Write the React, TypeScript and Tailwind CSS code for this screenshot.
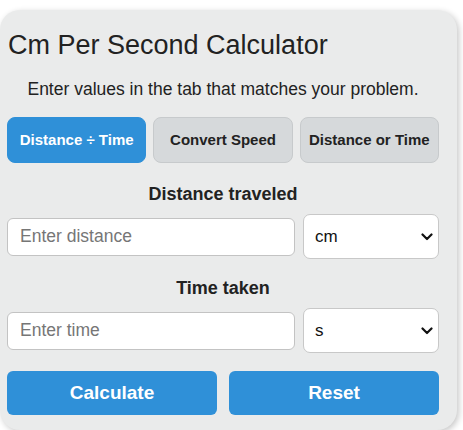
import { useState } from 'react';

const tabs = ['Distance ÷ Time', 'Convert Speed', 'Distance or Time'];

function Chevron() {
  return (
    <svg className="pointer-events-none absolute right-[6px] top-1/2 -translate-y-1/2" width="12" height="8" viewBox="0 0 12 8" fill="none">
      <path d="M1.5 1.5 L6 6 L10.5 1.5" stroke="#111" strokeWidth="2.2" strokeLinecap="round" strokeLinejoin="round" />
    </svg>
  );
}

function Field({ label, placeholder, unit }: { label: string; placeholder: string; unit: string }) {
  return (
    <div className="flex flex-col">
      <div className="pt-[2px] text-center text-[18px] font-bold leading-[21px] text-[#222]">{label}</div>
      <div className="mt-[9px] flex items-center gap-[8px]">
        <input
          type="text"
          placeholder={placeholder}
          className="h-[38px] min-w-0 flex-1 rounded-[6px] border border-[#c3c3c3] bg-white px-[12px] text-[17.5px] text-[#222] outline-none placeholder:text-[#767676]"
        />
        <div className="relative w-[136px]">
          <select
            defaultValue={unit}
            className="h-[45px] w-full appearance-none rounded-[7px] border border-[#c8c8c8] bg-white pl-[11px] pr-[24px] text-[17px] text-[#111] outline-none"
          >
            <option value={unit}>{unit}</option>
          </select>
          <Chevron />
        </div>
      </div>
    </div>
  );
}

export default function App() {
  const [active, setActive] = useState(0);

  return (
    <div className="h-[430px] w-[463px] overflow-hidden bg-white pt-[10px] font-['Liberation_Sans',Arial,sans-serif]">
      <div className="h-[420px] w-[457px] rounded-[20px] bg-[#eaebeb] pl-[7px] pr-[18px] pt-[20px] shadow-[2px_2px_6px_rgba(0,0,0,0.22)]">
        <h1 className="pl-[1px] text-[27px] leading-[31px] text-[#222]">Cm Per Second Calculator</h1>
        <p className="mt-[18px] text-center text-[17.5px] leading-[21px] text-[#222]">
          Enter values in the tab that matches your problem.
        </p>

        <div className="mt-[17px] grid grid-cols-3 gap-[7px]">
          {tabs.map((t, i) => (
            <button
              key={t}
              onClick={() => setActive(i)}
              className={
                i === active
                  ? 'h-[46px] rounded-[8px] border border-[#2f90d8] bg-[#2f90d8] text-[15px] font-bold text-white'
                  : 'h-[46px] rounded-[8px] border border-[#c7cacc] bg-[#d6d9db] text-[15px] font-bold text-[#222]'
              }
            >
              {t}
            </button>
          ))}
        </div>

        <div className="mt-[19px]">
          <Field label="Distance traveled" placeholder="Enter distance" unit="cm" />
        </div>
        <div className="mt-[17px]">
          <Field label="Time taken" placeholder="Enter time" unit="s" />
        </div>

        <div className="mt-[18px] grid grid-cols-2 gap-[12px]">
          <button className="h-[44px] rounded-[6px] bg-[#2f90d8] text-[19px] font-bold text-white">Calculate</button>
          <button className="h-[44px] rounded-[6px] bg-[#2f90d8] text-[19px] font-bold text-white">Reset</button>
        </div>
      </div>
    </div>
  );
}
